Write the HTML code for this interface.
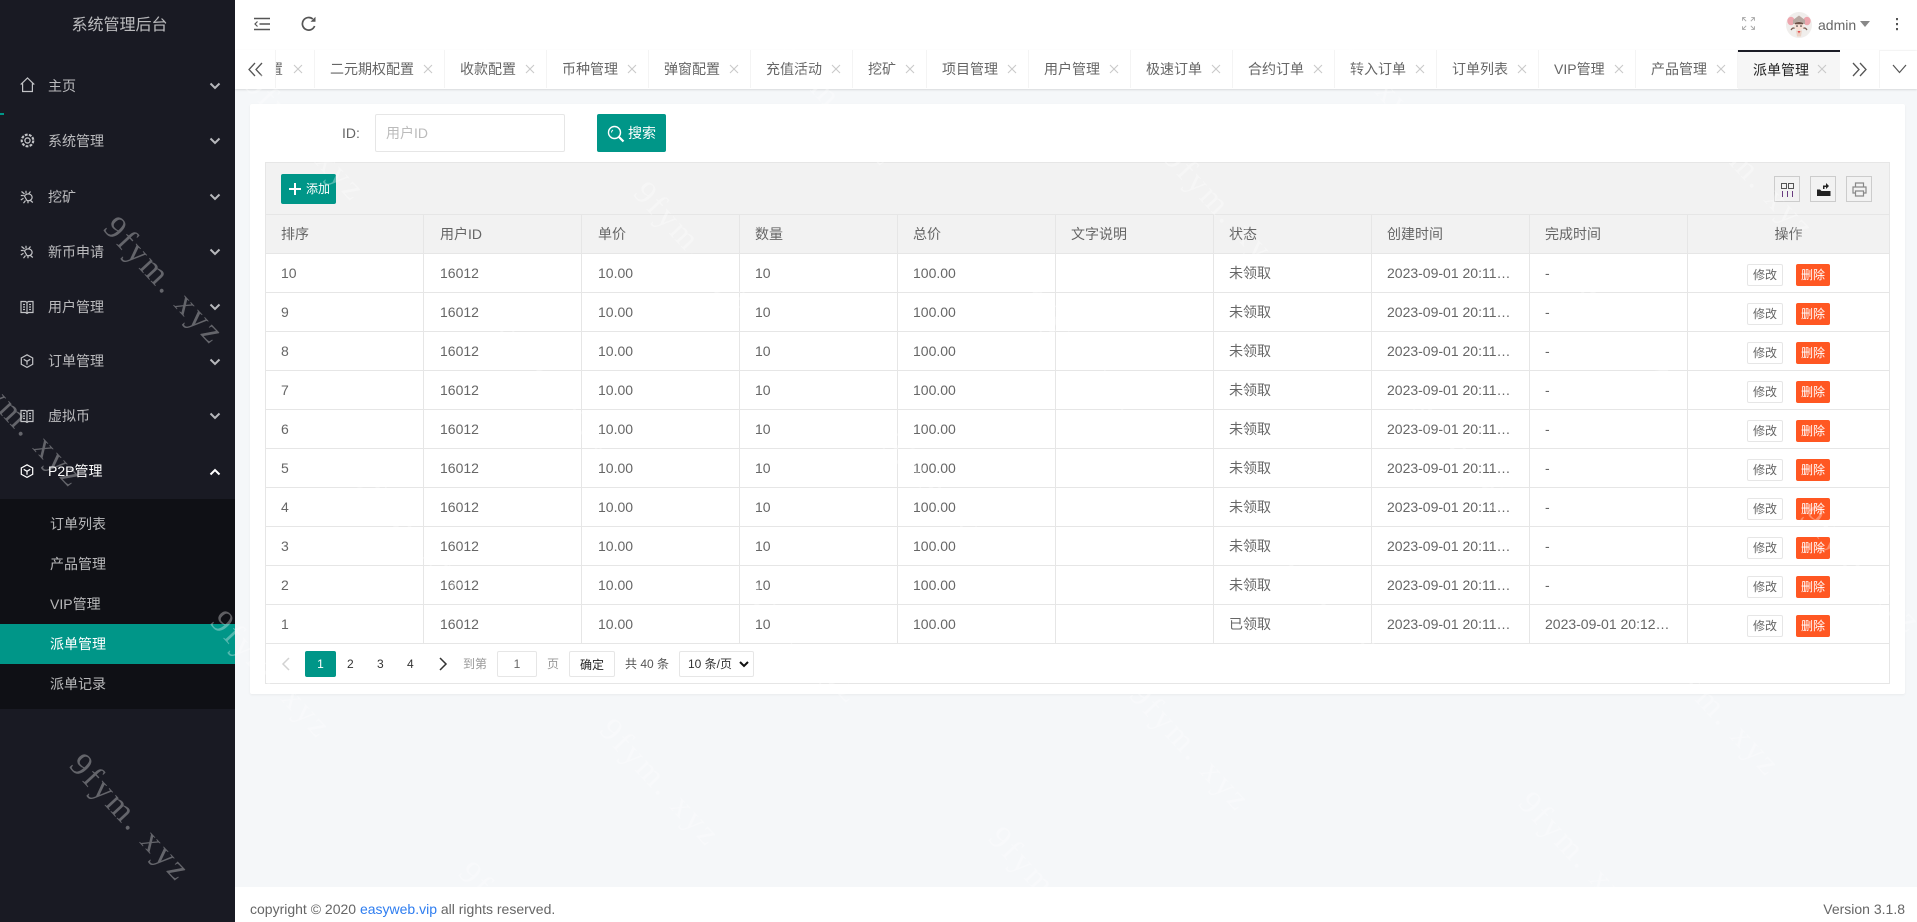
<!DOCTYPE html>
<html lang="zh-CN">
<head>
<meta charset="utf-8">
<title>系统管理后台</title>
<style>
*{box-sizing:border-box}
html,body{margin:0;padding:0;width:1917px;height:922px;overflow:hidden;background:#f5f7f9;font:14px/20px "Liberation Sans","Noto Sans CJK SC",sans-serif;color:#666}
.abs,.abs>*{position:absolute}
#side{left:0;top:0;width:235px;height:922px;background:#191a23;color:rgba(255,255,255,.7)}
#side .t{left:0;width:235px;text-align:center;top:15px;font-size:16px;line-height:22px;padding-left:4px}
.mi{left:48px;line-height:20px;white-space:nowrap}
.ico{left:20px;width:14px;height:14px;fill:none;stroke:#c2c3c6;stroke-width:1.2}
.arr{left:209px;width:12px;height:8px;fill:none;stroke:#b7b8bc;stroke-width:2}
#sub{left:0;top:499px;width:235px;height:210px;background:#0f1015}
.si{left:50px;line-height:20px}
#cur{left:0;top:624px;width:235px;height:40px;background:#009688}
#head{left:235px;top:0;width:1682px;height:50px;background:#fff}
#tabs{left:235px;top:50px;width:1682px;height:39px;background:#fff;border-top:1px solid #f4f4f4;box-shadow:0 1px 2px rgba(0,0,0,.12)}
.tab{top:50px;height:39px;border-right:1px solid #f4f4f4;padding-left:15px;line-height:39px;white-space:nowrap;color:#666;background:#fff}
.tab svg{position:absolute;top:14px;right:11px;width:10px;height:10px;stroke:#c9c9c9;stroke-width:1.1;fill:none}
.tab.on{background:#f6f6f6;color:#222;border-top:2px solid #1a1c25;border-right:0;line-height:37px;height:39px}
.tab.on svg{top:12px;right:13px}
#card{left:250px;top:104px;width:1655px;height:590px;background:#fff;border-radius:2px;box-shadow:0 1px 2px rgba(0,0,0,.05)}
#ipt{left:375px;top:114px;width:190px;height:38px;border:1px solid #e6e6e6;border-radius:2px;background:#fff;color:#bbb;line-height:36px;padding-left:10px}
#sbtn{left:597px;top:114px;width:69px;height:38px;background:#009688;border-radius:2px;color:#fff;line-height:38px;padding-left:31px}
#tool{left:265px;top:162px;width:1625px;height:53px;background:#f2f2f2;border:1px solid #e6e6e6;border-bottom:0}
#add{left:281px;top:174px;width:55px;height:30px;background:#009688;border-radius:2px;color:#fff;font-size:12px;line-height:30px;padding-left:25px}
.tb{top:176px;width:26px;height:26px;border:1px solid #ccc;background:#f2f2f2}
table{left:265px;top:214px;width:1625px;border-collapse:collapse;table-layout:fixed;background:#fff}
td,th{height:39px;border:1px solid #e6e6e6;padding:0 15px;font-weight:400;text-align:left;white-space:nowrap;overflow:hidden;color:#666;line-height:20px}
td:nth-child(2),th:nth-child(2),td:nth-child(3),th:nth-child(3){padding-left:16px}
th{background:#f2f2f2}
#pg{left:265px;top:644px;width:1625px;height:40px;border:1px solid #e6e6e6;border-top:0;background:#fff}
.p{top:651px;line-height:26px;font-size:12px;color:#333;white-space:nowrap}
.bx{border:1px solid #e6e6e6;border-radius:2px;background:#fff;text-align:center}
.e{top:0;width:36px;height:22px;border:1px solid #e6e6e6;border-radius:2px;font-size:12px;line-height:20px;text-align:center;background:#fff;color:#666}
.d{top:0;width:34px;height:22px;border-radius:2px;font-size:12px;line-height:22px;text-align:center;background:#ff5722;color:#fff}
#foot{left:235px;top:887px;width:1682px;height:35px;background:#fff}
#wm{left:0;top:0;width:1917px;height:922px;pointer-events:none;overflow:hidden}
#wm text{font:33px "Liberation Serif",serif;letter-spacing:3px;fill:rgba(255,255,255,.33)}
</style>
</head>
<body>
<div class="abs" style="position:absolute;left:0;top:0;width:1917px;height:922px;overflow:hidden">

<div id="side" class="abs">
  <div class="t">系统管理后台</div>
  <div style="left:0;top:113px;width:4px;height:2px;background:#009688"></div>

  <svg class="ico" style="top:77px;width:15px;height:16px" viewBox="0 0 15 16"><path d="M.7 7.6 7.5 1l6.8 6.6M2.6 6.4V14.5h9.8V6.4"/></svg>
  <div class="mi" style="top:76px">主页</div>
  <svg class="arr" style="top:82px" viewBox="0 0 12 8"><path d="M1.5 1.5 6 6l4.5-4.5"/></svg>

  <svg class="ico" style="top:133px;width:15px;height:15px" viewBox="0 0 14 14"><circle cx="7" cy="7" r="2.4"/><circle cx="7" cy="7" r="5.4" stroke-dasharray="2.6 1.2" stroke-width="2"/></svg>
  <div class="mi" style="top:131px">系统管理</div>
  <svg class="arr" style="top:137px" viewBox="0 0 12 8"><path d="M1.5 1.5 6 6l4.5-4.5"/></svg>

  <svg class="ico" style="top:190px" viewBox="0 0 14 14"><path d="M1.500 1.500 4.500 4M6 .8v2.700M10.500 1.500 8.500 4M4.500 6C6.500 3 10.500 3.500 11.800 6 13 9 10 11.500 7 10.500 6 9 5.500 8 4.500 6ZM.8 5.500h3M.8 10 3.500 8.300M3.500 13.200 5.500 10.500M8 13.200V11M12.800 12.500 10.500 10.500"/></svg>
  <div class="mi" style="top:187px">挖矿</div>
  <svg class="arr" style="top:193px" viewBox="0 0 12 8"><path d="M1.5 1.5 6 6l4.5-4.5"/></svg>

  <svg class="ico" style="top:245px" viewBox="0 0 14 14"><path d="M1.500 1.500 4.500 4M6 .8v2.700M10.500 1.500 8.500 4M4.500 6C6.500 3 10.500 3.500 11.800 6 13 9 10 11.500 7 10.500 6 9 5.500 8 4.500 6ZM.8 5.500h3M.8 10 3.500 8.300M3.500 13.200 5.500 10.500M8 13.200V11M12.800 12.500 10.500 10.500"/></svg>
  <div class="mi" style="top:242px">新币申请</div>
  <svg class="arr" style="top:248px" viewBox="0 0 12 8"><path d="M1.5 1.5 6 6l4.5-4.5"/></svg>

  <svg class="ico" style="top:300px" viewBox="0 0 14 14"><path d="M1 1.500h4.500l1.500 1 1.500-1H13V12.500H8.500L7 13.500l-1.500-1H1ZM7 2.500V13.500M3 4.500h2M3 7h2M3 9.500h2M9 4.500h2M9 7h2M9 9.500h2"/></svg>
  <div class="mi" style="top:297px">用户管理</div>
  <svg class="arr" style="top:303px" viewBox="0 0 12 8"><path d="M1.5 1.5 6 6l4.5-4.5"/></svg>

  <svg class="ico" style="top:354px" viewBox="0 0 14 14"><path d="M7 .8 12.700 4V10.300L7 13.400 1.300 10.300V4ZM3.700 5.300 7 7.300l3.300-2M7 7.300V10.800"/></svg>
  <div class="mi" style="top:351px">订单管理</div>
  <svg class="arr" style="top:358px" viewBox="0 0 12 8"><path d="M1.5 1.5 6 6l4.5-4.5"/></svg>

  <svg class="ico" style="top:409px" viewBox="0 0 14 14"><path d="M1 1.500h4.500l1.500 1 1.500-1H13V12.500H8.500L7 13.500l-1.500-1H1ZM7 2.500V13.500M3 4.500h2M3 7h2M3 9.500h2M9 4.500h2M9 7h2M9 9.500h2"/></svg>
  <div class="mi" style="top:406px">虚拟币</div>
  <svg class="arr" style="top:412px" viewBox="0 0 12 8"><path d="M1.5 1.5 6 6l4.5-4.5"/></svg>

  <svg class="ico" style="top:464px;stroke:#fff" viewBox="0 0 14 14"><path d="M7 .8 12.700 4V10.300L7 13.400 1.300 10.300V4ZM3.700 5.300 7 7.300l3.300-2M7 7.300V10.800"/></svg>
  <div class="mi" style="top:461px;color:#fff">P2P管理</div>
  <svg class="arr" style="top:468px;stroke:#fff" viewBox="0 0 12 8"><path d="M1.5 6.500 6 2l4.500 4.500"/></svg>

  <div id="sub"></div>
  <div id="cur"></div>
  <div class="si" style="top:514px">订单列表</div>
  <div class="si" style="top:554px">产品管理</div>
  <div class="si" style="top:594px">VIP管理</div>
  <div class="si" style="top:634px;color:#fff">派单管理</div>
  <div class="si" style="top:674px">派单记录</div>
</div>

<div id="head"></div>
<svg style="position:absolute;left:254px;top:17px" width="16" height="14" viewBox="0 0 16 14" fill="none" stroke="#555" stroke-width="1.500"><path d="M0 1.500h16M5.500 7H16M0 12.500h16"/><path d="M3.500 4.500 1 7l2.500 2.500" stroke-width="1.200"/></svg>
<svg style="position:absolute;left:301px;top:16px" width="16" height="16" viewBox="0 0 16 16" fill="none" stroke="#555" stroke-width="1.700"><path d="M13.600 10A6.300 6.300 0 1 1 11.800 3"/><path d="M14.500 .8V5.800H9.500Z" fill="#555" stroke="none"/></svg>
<svg style="position:absolute;left:1742px;top:17px" width="13" height="13" viewBox="0 0 14 14" fill="none" stroke="#a8a8a8" stroke-width="1"><path d="M.6 4V.6H4M.8.800 4.500 4.500M10 .6h3.400V4M13.200.800 9.500 4.500M.6 10V13.400H4M.8 13.200 4.500 9.500M10 13.400h3.400V10M13.200 13.200 9.500 9.500"/></svg>
<svg style="position:absolute;left:1786px;top:12px" width="26" height="26" viewBox="0 0 26 26"><circle cx="13" cy="13" r="13" fill="#f0eeec"/><ellipse cx="5" cy="9" rx="3.700" ry="4.300" fill="#eda6ae"/><ellipse cx="21" cy="9" rx="3.700" ry="4.300" fill="#eda6ae"/><path d="M7 8 13 3.500l6 4.500v4H7Z" fill="#b7a9a2"/><ellipse cx="13" cy="14" rx="4.700" ry="4.300" fill="#f8e0d6"/><path d="M9 11q4-2 8 0v1.300H9Z" fill="#6a4f46"/><circle cx="11" cy="14" r=".8" fill="#333"/><circle cx="15" cy="14" r=".8" fill="#333"/><path d="M5 18q2-3 3.500-1.500M21 18q-2-3-3.500-1.500" fill="none" stroke="#7b5c50" stroke-width="1.300"/><path d="M10 18.500h6l-1 6h-4Z" fill="#ecd3c7"/><path d="M11.500 19h3L13 21.500Z" fill="#e25050"/></svg>
<div style="position:absolute;left:1818px;top:15px;color:#666;line-height:20px">admin</div>
<div style="position:absolute;left:1860px;top:21px;width:0;height:0;border:5px solid transparent;border-top:6px solid #888;border-bottom:0"></div>
<svg style="position:absolute;left:1895px;top:17px" width="4" height="14" viewBox="0 0 4 14" fill="#555"><rect x="1" y="1" width="2" height="2.200"/><rect x="1" y="6" width="2" height="2.200"/><rect x="1" y="11" width="2" height="2.200"/></svg>

<div id="tabs"></div>
<div class="tab" style="left:276px;width:39px;padding-left:0;overflow:hidden;height:38px"><span style="position:absolute;left:-7px">置</span><svg viewBox="0 0 10 10"><path d="M1 1l8 8M9 1 1 9"/></svg></div>
<div class="tab" style="left:315px;width:130px;height:38px">二元期权配置<svg viewBox="0 0 10 10"><path d="M1 1l8 8M9 1 1 9"/></svg></div>
<div class="tab" style="left:445px;width:102px;height:38px">收款配置<svg viewBox="0 0 10 10"><path d="M1 1l8 8M9 1 1 9"/></svg></div>
<div class="tab" style="left:547px;width:102px;height:38px">币种管理<svg viewBox="0 0 10 10"><path d="M1 1l8 8M9 1 1 9"/></svg></div>
<div class="tab" style="left:649px;width:102px;height:38px">弹窗配置<svg viewBox="0 0 10 10"><path d="M1 1l8 8M9 1 1 9"/></svg></div>
<div class="tab" style="left:751px;width:102px;height:38px">充值活动<svg viewBox="0 0 10 10"><path d="M1 1l8 8M9 1 1 9"/></svg></div>
<div class="tab" style="left:853px;width:74px;height:38px">挖矿<svg viewBox="0 0 10 10"><path d="M1 1l8 8M9 1 1 9"/></svg></div>
<div class="tab" style="left:927px;width:102px;height:38px">项目管理<svg viewBox="0 0 10 10"><path d="M1 1l8 8M9 1 1 9"/></svg></div>
<div class="tab" style="left:1029px;width:102px;height:38px">用户管理<svg viewBox="0 0 10 10"><path d="M1 1l8 8M9 1 1 9"/></svg></div>
<div class="tab" style="left:1131px;width:102px;height:38px">极速订单<svg viewBox="0 0 10 10"><path d="M1 1l8 8M9 1 1 9"/></svg></div>
<div class="tab" style="left:1233px;width:102px;height:38px">合约订单<svg viewBox="0 0 10 10"><path d="M1 1l8 8M9 1 1 9"/></svg></div>
<div class="tab" style="left:1335px;width:102px;height:38px">转入订单<svg viewBox="0 0 10 10"><path d="M1 1l8 8M9 1 1 9"/></svg></div>
<div class="tab" style="left:1437px;width:102px;height:38px">订单列表<svg viewBox="0 0 10 10"><path d="M1 1l8 8M9 1 1 9"/></svg></div>
<div class="tab" style="left:1539px;width:97px;height:38px">VIP管理<svg viewBox="0 0 10 10"><path d="M1 1l8 8M9 1 1 9"/></svg></div>
<div class="tab" style="left:1636px;width:102px;height:38px">产品管理<svg viewBox="0 0 10 10"><path d="M1 1l8 8M9 1 1 9"/></svg></div>
<div class="tab on" style="left:1738px;width:102px">派单管理<svg viewBox="0 0 10 10"><path d="M1 1l8 8M9 1 1 9"/></svg></div>
<div style="position:absolute;left:235px;top:50px;width:41px;height:38px;background:#fff;border-right:1px solid #f4f4f4"></div>
<svg style="position:absolute;left:248px;top:62px" width="15" height="15" viewBox="0 0 15 15" fill="none" stroke="#555" stroke-width="1.300"><path d="M7 1 1 7.500 7 14M14 1 8 7.500 14 14"/></svg>
<div style="position:absolute;left:1840px;top:50px;width:40px;height:38px;background:#fff;border-right:1px solid #f4f4f4"></div>
<svg style="position:absolute;left:1852px;top:62px" width="15" height="15" viewBox="0 0 15 15" fill="none" stroke="#555" stroke-width="1.300"><path d="M1 1 7 7.500 1 14M8 1 14 7.500 8 14"/></svg>
<svg style="position:absolute;left:1892px;top:64px" width="15" height="10" viewBox="0 0 15 10" fill="none" stroke="#555" stroke-width="1.200"><path d="M1 1 7.500 8.500 14 1"/></svg>

<div id="card" style="position:absolute"></div>
<div style="position:absolute;left:342px;top:123px;color:#666">ID:</div>
<div id="ipt" style="position:absolute">用户ID</div>
<div id="sbtn" style="position:absolute">搜索
<svg style="position:absolute;left:10px;top:11px" width="18" height="18" viewBox="0 0 18 18" fill="none" stroke="#fff" stroke-width="1.400"><circle cx="7.500" cy="7.500" r="6"/><path d="M12 12l4.500 4.500" stroke-width="2.200"/><path d="M4.500 7.500A3 3 0 0 1 6 5" stroke-width="1"/></svg></div>

<div id="tool" style="position:absolute"></div>
<div id="add" style="position:absolute">添加
<svg style="position:absolute;left:8px;top:9px" width="12" height="12" viewBox="0 0 12 12" stroke="#fff" stroke-width="2"><path d="M6 0V12M0 6H12"/></svg></div>
<div class="tb" style="position:absolute;left:1774px"><svg style="position:absolute;left:6px;top:6px" width="13" height="14" viewBox="0 0 13 14" fill="none" stroke="#555" stroke-width="1"><rect x=".5" y=".5" width="5" height="5"/><rect x="7.500" y=".5" width="5" height="5"/><path d="M1.500 8v6M6.500 8v6M11.500 8v6" stroke="#6a3c80"/></svg></div>
<div class="tb" style="position:absolute;left:1810px"><svg style="position:absolute;left:5px;top:5px" width="15" height="15" viewBox="0 0 15 15" fill="#222"><path d="M1 7.500h3l1.500 1.500h9V14H1Z"/><path d="M7 7V3.500h3V1l3 3-3 3V5H8.500v2Z"/></svg></div>
<div class="tb" style="position:absolute;left:1846px"><svg style="position:absolute;left:5px;top:5px" width="15" height="15" viewBox="0 0 15 15" fill="none" stroke="#888" stroke-width="1.200"><path d="M3.500 5V1h8v4M3.500 11H1V5h13v6h-2.500"/><path d="M3.500 9h8v5h-8Z"/></svg></div>

<table style="position:absolute">
<colgroup><col style="width:158px"><col style="width:158px"><col style="width:158px"><col style="width:158px"><col style="width:158px"><col style="width:158px"><col style="width:158px"><col style="width:158px"><col style="width:158px"><col></colgroup>
<tr><th>排序</th><th>用户ID</th><th>单价</th><th>数量</th><th>总价</th><th>文字说明</th><th>状态</th><th>创建时间</th><th>完成时间</th><th style="text-align:center">操作</th></tr>
<tr><td>10</td><td>16012</td><td>10.00</td><td>10</td><td>100.00</td><td></td><td>未领取</td><td>2023-09-01 20:11…</td><td>-</td><td></td></tr>
<tr><td>9</td><td>16012</td><td>10.00</td><td>10</td><td>100.00</td><td></td><td>未领取</td><td>2023-09-01 20:11…</td><td>-</td><td></td></tr>
<tr><td>8</td><td>16012</td><td>10.00</td><td>10</td><td>100.00</td><td></td><td>未领取</td><td>2023-09-01 20:11…</td><td>-</td><td></td></tr>
<tr><td>7</td><td>16012</td><td>10.00</td><td>10</td><td>100.00</td><td></td><td>未领取</td><td>2023-09-01 20:11…</td><td>-</td><td></td></tr>
<tr><td>6</td><td>16012</td><td>10.00</td><td>10</td><td>100.00</td><td></td><td>未领取</td><td>2023-09-01 20:11…</td><td>-</td><td></td></tr>
<tr><td>5</td><td>16012</td><td>10.00</td><td>10</td><td>100.00</td><td></td><td>未领取</td><td>2023-09-01 20:11…</td><td>-</td><td></td></tr>
<tr><td>4</td><td>16012</td><td>10.00</td><td>10</td><td>100.00</td><td></td><td>未领取</td><td>2023-09-01 20:11…</td><td>-</td><td></td></tr>
<tr><td>3</td><td>16012</td><td>10.00</td><td>10</td><td>100.00</td><td></td><td>未领取</td><td>2023-09-01 20:11…</td><td>-</td><td></td></tr>
<tr><td>2</td><td>16012</td><td>10.00</td><td>10</td><td>100.00</td><td></td><td>未领取</td><td>2023-09-01 20:11…</td><td>-</td><td></td></tr>
<tr><td>1</td><td>16012</td><td>10.00</td><td>10</td><td>100.00</td><td></td><td>已领取</td><td>2023-09-01 20:11…</td><td>2023-09-01 20:12…</td><td></td></tr>
</table>

<div class="e" style="position:absolute;left:1747px;top:264px">修改</div><div class="d" style="position:absolute;left:1796px;top:264px">删除</div>
<div class="e" style="position:absolute;left:1747px;top:303px">修改</div><div class="d" style="position:absolute;left:1796px;top:303px">删除</div>
<div class="e" style="position:absolute;left:1747px;top:342px">修改</div><div class="d" style="position:absolute;left:1796px;top:342px">删除</div>
<div class="e" style="position:absolute;left:1747px;top:381px">修改</div><div class="d" style="position:absolute;left:1796px;top:381px">删除</div>
<div class="e" style="position:absolute;left:1747px;top:420px">修改</div><div class="d" style="position:absolute;left:1796px;top:420px">删除</div>
<div class="e" style="position:absolute;left:1747px;top:459px">修改</div><div class="d" style="position:absolute;left:1796px;top:459px">删除</div>
<div class="e" style="position:absolute;left:1747px;top:498px">修改</div><div class="d" style="position:absolute;left:1796px;top:498px">删除</div>
<div class="e" style="position:absolute;left:1747px;top:537px">修改</div><div class="d" style="position:absolute;left:1796px;top:537px">删除</div>
<div class="e" style="position:absolute;left:1747px;top:576px">修改</div><div class="d" style="position:absolute;left:1796px;top:576px">删除</div>
<div class="e" style="position:absolute;left:1747px;top:615px">修改</div><div class="d" style="position:absolute;left:1796px;top:615px">删除</div>

<div id="pg" style="position:absolute"></div>
<svg style="position:absolute;left:281px;top:657px" width="9" height="14" viewBox="0 0 9 14" fill="none" stroke="#d2d2d2" stroke-width="1.500"><path d="M8 1 2 7l6 6"/></svg>
<div class="p" style="position:absolute;left:305px;width:31px;height:26px;background:#009688;color:#fff;text-align:center;border-radius:2px">1</div>
<div class="p" style="position:absolute;left:347px">2</div>
<div class="p" style="position:absolute;left:377px">3</div>
<div class="p" style="position:absolute;left:407px">4</div>
<svg style="position:absolute;left:439px;top:657px" width="9" height="14" viewBox="0 0 9 14" fill="none" stroke="#333" stroke-width="1.500"><path d="M1 1l6 6-6 6"/></svg>
<div class="p" style="position:absolute;left:463px;color:#999">到第</div>
<div class="p bx" style="position:absolute;left:497px;width:40px;height:26px;line-height:24px;color:#666">1</div>
<div class="p" style="position:absolute;left:547px;color:#999">页</div>
<div class="p bx" style="position:absolute;left:569px;width:46px;height:26px;line-height:26px;color:#222">确定</div>
<div class="p" style="position:absolute;left:625px;color:#555">共 40 条</div>
<div class="p bx" style="position:absolute;left:679px;width:75px;height:26px;line-height:24px;color:#333;text-align:left;padding-left:8px">10 条/页<svg style="position:absolute;left:59px;top:9px" width="10" height="7" viewBox="0 0 10 7" fill="none" stroke="#111" stroke-width="2"><path d="M1 1l4 4 4-4"/></svg></div>

<div id="foot" style="position:absolute"></div>
<div style="position:absolute;left:250px;top:899px;white-space:nowrap">copyright © 2020 <span style="color:#2e7df0">easyweb.vip</span> all rights reserved.</div>
<div style="position:absolute;right:12px;top:899px">Version 3.1.8</div>

<svg id="wm" style="position:absolute" width="1917" height="922" viewBox="0 0 1917 922">
<text transform="translate(-39 372) rotate(47)">9fym. xyz</text>
<text transform="translate(102 229) rotate(47)">9fym. xyz</text>
<text transform="translate(243 86) rotate(47)">9fym. xyz</text>
<text transform="translate(384 -57) rotate(47)">9fym. xyz</text>
<text transform="translate(68 766) rotate(47)">9fym. xyz</text>
<text transform="translate(209 623) rotate(47)">9fym. xyz</text>
<text transform="translate(350 480) rotate(47)">9fym. xyz</text>
<text transform="translate(491 337) rotate(47)">9fym. xyz</text>
<text transform="translate(632 194) rotate(47)">9fym. xyz</text>
<text transform="translate(773 51) rotate(47)">9fym. xyz</text>
<text transform="translate(914 -92) rotate(47)">9fym. xyz</text>
<text transform="translate(457 874) rotate(47)">9fy</text>
<text transform="translate(598 731) rotate(47)">9fym. xyz</text>
<text transform="translate(739 588) rotate(47)">9fym. xyz</text>
<text transform="translate(880 445) rotate(47)">9fym. xyz</text>
<text transform="translate(1021 302) rotate(47)">9fym. xyz</text>
<text transform="translate(1162 159) rotate(47)">9fym. xyz</text>
<text transform="translate(1303 16) rotate(47)">9fym. xyz</text>
<text transform="translate(987 839) rotate(47)">9fym.</text>
<text transform="translate(1128 696) rotate(47)">9fym. xyz</text>
<text transform="translate(1269 553) rotate(47)">9fym. xyz</text>
<text transform="translate(1410 410) rotate(47)">9fym. xyz</text>
<text transform="translate(1551 267) rotate(47)">9fym. xyz</text>
<text transform="translate(1692 124) rotate(47)">9fym. xyz</text>
<text transform="translate(1833 -19) rotate(47)">9fym. xyz</text>
<text transform="translate(1517 804) rotate(47)">9fym. xy</text>
<text transform="translate(1658 661) rotate(47)">9fym. xyz</text>
<text transform="translate(1799 518) rotate(47)">9fym. xyz</text>
</svg>
</div>
</body>
</html>
